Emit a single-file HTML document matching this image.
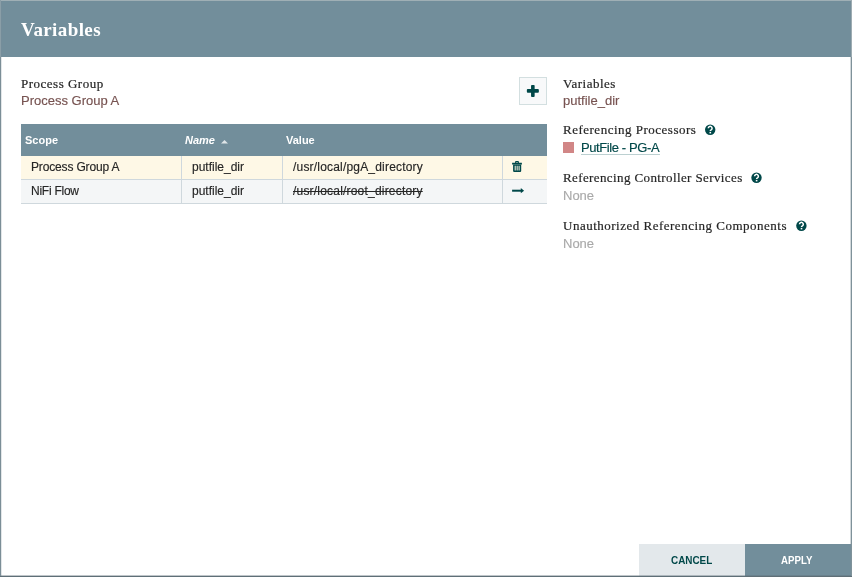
<!DOCTYPE html>
<html><head><meta charset="utf-8">
<style>
html,body{margin:0;padding:0;}
body{width:852px;height:577px;overflow:hidden;background:#7b8e97;position:relative;font-family:"Liberation Sans",sans-serif;}
#dlg{will-change:transform;position:absolute;left:1px;top:1px;width:850px;height:575px;background:#fff;overflow:hidden;}
.t{position:absolute;white-space:nowrap;line-height:1;}
.hdr{position:absolute;left:0;top:0;width:850px;height:56px;background:#728e9b;}
.serif{font-family:"Liberation Serif",serif;}
.lbl{font-family:"Liberation Serif",serif;font-size:13px;color:#262626;letter-spacing:0.5px;-webkit-text-stroke:0.2px currentColor;}
.val{font-size:13px;color:#775351;-webkit-text-stroke:0.15px currentColor;}
.none{font-size:13px;color:#aaaaaa;-webkit-text-stroke:0.15px currentColor;}
.tbl{position:absolute;left:20px;top:123px;width:526px;}
.th{position:absolute;left:0;top:0;width:526px;height:32px;background:#728e9b;}
.row{position:absolute;left:0;width:526px;height:23px;border-bottom:1px solid #cfd8dd;}
.vl{position:absolute;width:1px;background:#cfd8dd;}
.cell{font-size:12px;color:#262626;-webkit-text-stroke:0.15px currentColor;}
.thx{font-size:11px;color:#fff;font-weight:bold;}
svg{position:absolute;overflow:visible;}
</style></head>
<body>
<div id="dlg">
  <div class="hdr"></div>
  <div class="t serif" style="left:20px;top:19px;font-size:19px;font-weight:bold;color:#fff;letter-spacing:0.4px;">Variables</div>

  <div class="t lbl" style="left:20px;top:76px;">Process Group</div>
  <div class="t val" style="left:20px;top:93px;">Process Group A</div>

  <!-- plus button -->
  <div style="position:absolute;left:518px;top:76px;width:26px;height:26px;border:1px solid #d3dfe0;background:#f8f9fa;"></div>
  <svg style="left:0;top:0;" width="850" height="575">
    <g fill="#004849">
      <rect x="525.85" y="88.1" width="12" height="3.6" rx="0.9"/>
      <rect x="530.05" y="83.9" width="3.6" height="12" rx="0.9"/>
    </g>
  </svg>

  <!-- table -->
  <div class="tbl">
    <div class="th"></div>
    <div class="t thx" style="left:4px;top:11px;">Scope</div>
    <div class="t thx" style="left:164px;top:11px;font-style:italic;">Name</div>
    <svg style="left:200px;top:16px;" width="8" height="4"><polygon points="0,3.5 3.5,0 7,3.5" fill="#dfe5e8"/></svg>
    <div class="t thx" style="left:265px;top:11px;">Value</div>
    <div class="row" style="top:32px;background:#fef8e6;"></div>
    <div class="row" style="top:56px;background:#f4f6f7;"></div>
    <div class="vl" style="left:160px;top:32px;height:48px;"></div>
    <div class="vl" style="left:261px;top:32px;height:48px;"></div>
    <div class="vl" style="left:481px;top:32px;height:48px;"></div>
    <div class="t cell" style="left:10px;top:37px;letter-spacing:-0.16px;">Process Group A</div>
    <div class="t cell" style="left:171px;top:37px;">putfile_dir</div>
    <div class="t cell" style="left:272px;top:37px;letter-spacing:0.19px;">/usr/local/pgA_directory</div>
    <div class="t cell" style="left:10px;top:61px;letter-spacing:-0.25px;">NiFi Flow</div>
    <div class="t cell" style="left:171px;top:61px;">putfile_dir</div>
    <div class="t cell" style="left:272px;top:61px;text-decoration:line-through;letter-spacing:0.2px;">/usr/local/root_directory</div>
  </div>
  <!-- trash icon -->
  <svg style="left:0;top:0;" width="850" height="575">
    <g fill="#004849">
      <path d="M511.2 161.7 h2.9 v-0.8 a0.8 0.8 0 0 1 0.8-0.8 h2.2 a0.8 0.8 0 0 1 0.8 0.8 v0.8 h2.9 l0.2 1.7 h-10 z M515.1 161.7 h1.8 v-0.5 h-1.8 z" fill-rule="evenodd"/>
      <path d="M512.1 163.4 h8.1 v6.5 a1.1 1.1 0 0 1 -1.1 1.1 h-5.9 a1.1 1.1 0 0 1 -1.1 -1.1 z M513.7 164.8 v4.8 h1 v-4.8 z M515.65 164.8 v4.8 h1 v-4.8 z M517.6 164.8 v4.8 h1 v-4.8 z" fill-rule="evenodd"/>
    </g>
    <!-- arrow -->
    <g fill="#004849">
      <rect x="511.1" y="188.7" width="9.2" height="2" />
      <polygon points="519.8,187.1 523.1,189.7 519.8,192.3"/>
    </g>
  </svg>

  <!-- right column -->
  <div class="t lbl" style="left:562px;top:76px;">Variables</div>
  <div class="t val" style="left:562px;top:93px;">putfile_dir</div>
  <div class="t lbl" style="left:562px;top:122px;">Referencing Processors</div>
  <div style="position:absolute;left:562px;top:141px;width:11px;height:11px;background:#d18686;"></div>
  <div class="t val" style="left:580px;top:140px;color:#004849;letter-spacing:-0.4px;">PutFile - PG-A</div>
  <div style="position:absolute;left:580px;top:153px;width:79px;height:1px;background:#bcd0d1;"></div>
  <div class="t lbl" style="left:562px;top:170px;letter-spacing:0.39px;">Referencing Controller Services</div>
  <div class="t none" style="left:562px;top:188px;">None</div>
  <div class="t lbl" style="left:562px;top:218px;">Unauthorized Referencing Components</div>
  <div class="t none" style="left:562px;top:236px;">None</div>

  <!-- help icons -->
  <svg style="left:0;top:0;" width="850" height="575">
    <g id="q">
      <circle cx="709.2" cy="128.8" r="5.2" fill="#004849"/>
      <path d="M707.3 127.3 a1.9 1.9 0 1 1 2.9 1.6 c-0.6 0.35 -0.9 0.6 -0.9 1.2" fill="none" stroke="#fff" stroke-width="1.5"/>
      <rect x="708.5" y="130.9" width="1.6" height="1.5" fill="#fff"/>
    </g>
    <use href="#q" x="46.3" y="48"/>
    <use href="#q" x="91.2" y="96"/>
  </svg>

  <!-- buttons -->
  <div style="position:absolute;left:638px;top:543px;width:106px;height:32px;background:#e3e8eb;"></div>
  <div style="position:absolute;left:744px;top:543px;width:106px;height:32px;background:#728e9b;"></div>
  <div class="t" style="left:670px;top:554px;font-size:11px;font-weight:bold;color:#004849;transform:scaleX(0.9);transform-origin:0 0;">CANCEL</div>
  <div class="t" style="left:780px;top:554px;font-size:11px;font-weight:bold;color:#fff;transform:scaleX(0.88);transform-origin:0 0;">APPLY</div>
</div>

<div style="position:absolute;left:0;top:0;width:852px;height:1px;background:#9fafb5;"></div>
<div style="position:absolute;left:0;top:0;width:1px;height:577px;background:#7b8e97;"></div>
<div style="position:absolute;left:851px;top:0;width:1px;height:577px;background:#7f929a;"></div>
<div style="position:absolute;left:0;top:576px;width:852px;height:1px;background:#5f6f77;"></div>
<div style="position:absolute;left:1px;top:1px;width:1px;height:575px;background:rgba(123,142,151,0.22);"></div>
<div style="position:absolute;left:850px;top:1px;width:1px;height:575px;background:rgba(123,142,151,0.35);"></div>
<div style="position:absolute;left:1px;top:575px;width:850px;height:1px;background:rgba(95,111,119,0.4);"></div>
<div style="position:absolute;left:851px;top:0;width:1px;height:57px;background:#9dacb2;"></div>
<div style="position:absolute;left:0;top:0;width:1px;height:57px;background:#8a9ea7;"></div>
</body></html>
